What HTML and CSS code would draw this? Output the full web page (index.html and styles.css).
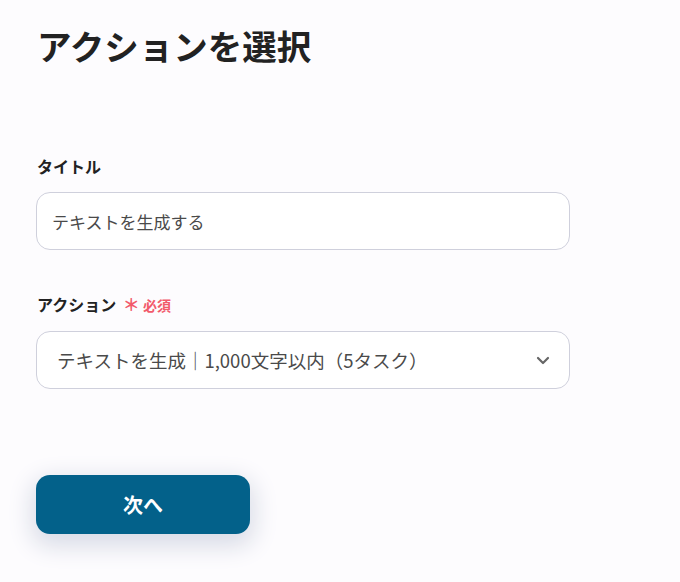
FILE: index.html
```html
<!DOCTYPE html>
<html lang="ja">

<head>
    <meta charset="UTF-8">
    <meta name="viewport" content="width=device-width, initial-scale=1.0">
    <title>アクションを選択</title>
    <link rel="stylesheet" href="styles.css">
</head>

<body>
    <div class="pagina">
        <h1>アクションを選択</h1>
        <form class="formulario" onsubmit="return false;">
            <div class="campo">
                <label class="etiqueta" for="titulo">タイトル</label>
                <input class="caja" type="text" id="titulo" value="テキストを生成する">
            </div>
            <div class="campo">
                <label class="etiqueta">アクション <span class="requerido"><span class="asterisco">＊</span> 必須</span></label>
                <div class="caja selector">
                    <span>テキストを生成｜1,000文字以内（5タスク）</span>
                    <svg class="flecha" width="16" height="16" viewBox="0 0 16 16">
                        <path d="M3 6l5 5 5-5" fill="none" stroke="#666" stroke-width="2.2" stroke-linecap="round" stroke-linejoin="round"/>
                    </svg>
                </div>
            </div>
            <button class="boton" type="submit">次へ</button>
        </form>
    </div>
</body>

</html>
```

FILE: styles.css
```css
html {
    background-color: #fdfcfe;
}

body {
    margin: 0;
    min-height: 100vh;
    background-color: #fdfcfe;
    color: #222;
    font-family: "Noto Sans CJK JP", "Noto Sans", sans-serif;
}

.pagina {
    padding: 21px 36px 0 36px;
}

h1 {
    font-size: 34.5px;
    font-weight: 700;
    margin: 0 0 0 1px;
    line-height: 48px;
}

.formulario {
    width: 534px;
    margin-top: 87px;
}

.campo {
    margin-bottom: 44px;
}

.etiqueta {
    display: block;
    font-size: 16px;
    font-weight: 700;
    line-height: 20px;
    margin: 0 0 16px 1px;
}

.requerido {
    color: #f25a6b;
    font-size: 14px;
    margin-left: 3px;
}

.asterisco {
    font-size: 17px;
}

.caja {
    box-sizing: border-box;
    width: 100%;
    height: 58px;
    border: 1px solid #cfd0dc;
    border-radius: 14px;
    background-color: #fff;
    font-family: inherit;
    font-size: 17px;
    color: #4a4a4a;
    padding: 0 15px;
    outline: none;
}

.selector {
    display: flex;
    align-items: center;
    justify-content: space-between;
    padding: 0 18px 0 20px;
    font-size: 18.5px;
}

.boton {
    margin-top: 42px;
    width: 214px;
    height: 59px;
    border: none;
    border-radius: 14px;
    background-color: #03618a;
    color: #fff;
    font-family: inherit;
    font-size: 20px;
    font-weight: 700;
    box-shadow: 0 8px 24px 4px #d8dbe6;
}
```
